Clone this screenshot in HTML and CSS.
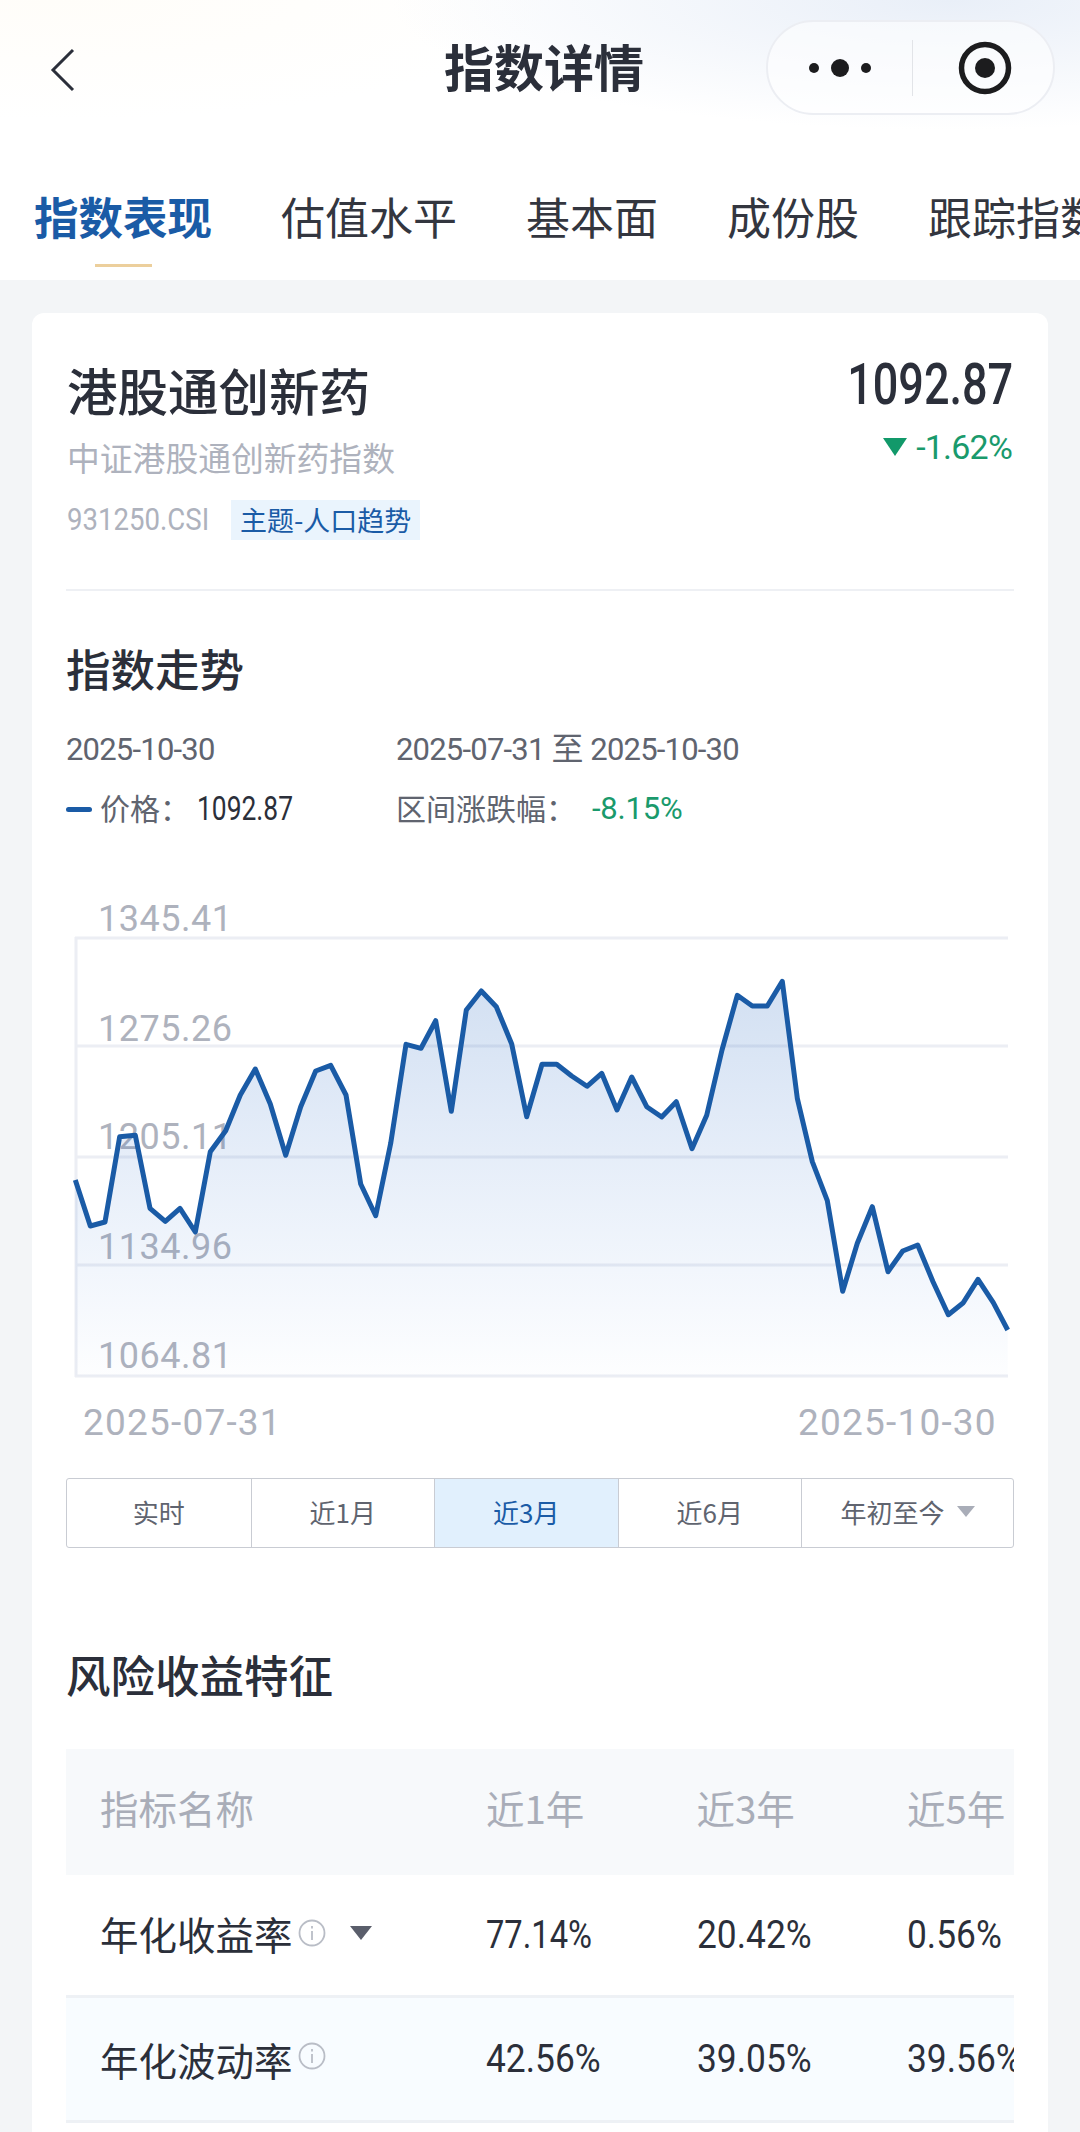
FILE: index.html
```html
<!DOCTYPE html>
<html lang="zh-CN">

<head>
    <meta charset="UTF-8">
    <meta name="viewport" content="width=device-width, initial-scale=1.0">
    <title>指数详情</title>
    <link rel="stylesheet" href="styles.css">
</head>

<body>
    <header class="top">
        <div class="nav">
            <svg class="back" width="30" height="50" viewBox="0 0 30 50">
                <path d="M23 5 L3 25 L23 45" fill="none" stroke="#2b2f3a" stroke-width="3" />
            </svg>
            <h1 class="nav-title">指数详情</h1>
            <div class="capsule">
                <svg class="capsule-dots" width="64" height="24" viewBox="0 0 64 24">
                    <circle cx="6" cy="12" r="5" fill="#1c1c1e" />
                    <circle cx="32" cy="12" r="9" fill="#1c1c1e" />
                    <circle cx="58" cy="12" r="5" fill="#1c1c1e" />
                </svg>
                <span class="capsule-line"></span>
                <svg class="capsule-target" width="54" height="54" viewBox="0 0 54 54">
                    <circle cx="27" cy="27" r="23.5" fill="none" stroke="#1c1c1e" stroke-width="5.5" />
                    <circle cx="27" cy="27" r="10" fill="#1c1c1e" />
                </svg>
            </div>
        </div>
        <nav class="tabs">
            <span class="tab active">指数表现</span>
            <span class="tab">估值水平</span>
            <span class="tab">基本面</span>
            <span class="tab">成份股</span>
            <span class="tab">跟踪指数</span>
        </nav>
    </header>

    <main class="page">
        <section class="card">
            <div class="summary">
                <div>
                    <h2 class="index-name">港股通创新药</h2>
                    <p class="index-full">中证港股通创新药指数</p>
                    <div class="code-row">
                        <div class="code-box"><span class="code num">931250.CSI</span></div>
                        <span class="tag">主题-人口趋势</span>
                    </div>
                </div>
                <div class="quote">
                    <div class="price num">1092.87</div>
                    <div class="change num"><i class="down"></i>-1.62%</div>
                </div>
            </div>

            <h2 class="section-title first">指数走势</h2>
            <div class="info-grid">
                <div class="date num">2025-10-30</div>
                <div class="date num">2025-07-31 <span class="cjk">至</span> 2025-10-30</div>
                <div class="legend"><i class="legend-line"></i>价格：<span class="legend-price num">1092.87</span></div>
                <div class="legend">区间涨跌幅：<span class="legend-change num">-8.15%</span></div>
            </div>

            <svg class="chart" width="948" height="555" viewBox="66 890 948 555">
                <defs>
                    <linearGradient id="area" x1="0" y1="981" x2="0" y2="1376" gradientUnits="userSpaceOnUse">
                        <stop offset="0" stop-color="#1f62bd" stop-opacity="0.2" />
                        <stop offset="1" stop-color="#2a6fd6" stop-opacity="0.01" />
                    </linearGradient>
                </defs>
                <g stroke="#eceef4" stroke-width="3">
                    <line x1="75" y1="938" x2="1008" y2="938" />
                    <line x1="75" y1="1046" x2="1008" y2="1046" />
                    <line x1="75" y1="1157" x2="1008" y2="1157" />
                    <line x1="75" y1="1265" x2="1008" y2="1265" />
                    <line x1="75" y1="1376" x2="1008" y2="1376" />
                    <line x1="76" y1="937" x2="76" y2="1377" />
                </g>
                <g class="axis-label">
                    <text x="98" y="931">1345.41</text>
                    <text x="98" y="1041">1275.26</text>
                    <text x="98" y="1149">1205.11</text>
                    <text x="98" y="1259">1134.96</text>
                    <text x="98" y="1368">1064.81</text>
                </g>
                <g class="axis-label dates">
                    <text x="83" y="1435">2025-07-31</text>
                    <text x="798" y="1435">2025-10-30</text>
                </g>
                <polygon fill="url(#area)" points="75.3,1376 75.3,1180 90.3,1226 105,1222 119.7,1136.7 135.3,1135.3 150,1208.3 165.3,1221.3 180,1208.3 195.3,1232 210.3,1151.7 225.7,1130.7 240.3,1095 255.3,1069 270.3,1104 285.7,1155.3 300.7,1106.7 315.7,1071 330.7,1065.3 346,1095 360.7,1184 375.7,1215.7 390.7,1143.3 406,1044.3 421,1048.3 435.7,1020.7 451.3,1111.3 466.3,1010 481.3,991 496.3,1006.7 511.7,1044 526.7,1116.7 542,1064.3 556.7,1064.3 571.7,1076 587,1086.3 601.7,1073.3 617,1110 631.7,1077 646.7,1106.7 661.7,1117 676.3,1101.7 692,1148.7 706.7,1115.3 722,1050 737.3,995.3 752.3,1006 767.3,1006 782.3,981.3 797.3,1098.3 812.3,1161.7 827.3,1200.7 842.7,1291.3 857.3,1243.3 872.3,1206.7 888,1271.7 902.7,1251 917.7,1245 933,1281.7 948.3,1314.7 963.3,1302.7 978,1279.3 993.3,1302.7 1007.7,1330 1007.7,1376" />
                <polyline fill="none" stroke="#1a5ba6" stroke-width="5" stroke-linejoin="round" points="75.3,1180 90.3,1226 105,1222 119.7,1136.7 135.3,1135.3 150,1208.3 165.3,1221.3 180,1208.3 195.3,1232 210.3,1151.7 225.7,1130.7 240.3,1095 255.3,1069 270.3,1104 285.7,1155.3 300.7,1106.7 315.7,1071 330.7,1065.3 346,1095 360.7,1184 375.7,1215.7 390.7,1143.3 406,1044.3 421,1048.3 435.7,1020.7 451.3,1111.3 466.3,1010 481.3,991 496.3,1006.7 511.7,1044 526.7,1116.7 542,1064.3 556.7,1064.3 571.7,1076 587,1086.3 601.7,1073.3 617,1110 631.7,1077 646.7,1106.7 661.7,1117 676.3,1101.7 692,1148.7 706.7,1115.3 722,1050 737.3,995.3 752.3,1006 767.3,1006 782.3,981.3 797.3,1098.3 812.3,1161.7 827.3,1200.7 842.7,1291.3 857.3,1243.3 872.3,1206.7 888,1271.7 902.7,1251 917.7,1245 933,1281.7 948.3,1314.7 963.3,1302.7 978,1279.3 993.3,1302.7 1007.7,1330" />
            </svg>

            <div class="ranges">
                <div class="range">实时</div>
                <div class="range">近1月</div>
                <div class="range active">近3月</div>
                <div class="range">近6月</div>
                <div class="range">年初至今<i class="range-arrow"></i></div>
            </div>

            <h2 class="section-title risk">风险收益特征</h2>
            <div class="table">
                <div class="row head">
                    <div class="cell name">指标名称</div>
                    <div class="cell">近1年</div>
                    <div class="cell">近3年</div>
                    <div class="cell">近5年</div>
                </div>
                <div class="row first-row">
                    <div class="cell name">年化收益率
                        <svg class="info" width="28" height="28" viewBox="0 0 28 28">
                            <circle cx="14" cy="14" r="12.5" fill="none" stroke="#b9bdc6" stroke-width="1.8" />
                            <path d="M14 12 V21 M14 7 V9.5" stroke="#b9bdc6" stroke-width="1.8" />
                        </svg>
                        <i class="row-arrow"></i>
                    </div>
                    <div class="cell num value tight">77.14%</div>
                    <div class="cell num value">20.42%</div>
                    <div class="cell num value">0.56%</div>
                </div>
                <div class="row tint">
                    <div class="cell name">年化波动率
                        <svg class="info raised" width="28" height="28" viewBox="0 0 28 28">
                            <circle cx="14" cy="14" r="12.5" fill="none" stroke="#b9bdc6" stroke-width="1.8" />
                            <path d="M14 12 V21 M14 7 V9.5" stroke="#b9bdc6" stroke-width="1.8" />
                        </svg>
                    </div>
                    <div class="cell num value">42.56%</div>
                    <div class="cell num value">39.05%</div>
                    <div class="cell num value">39.56%</div>
                </div>
            </div>
        </section>
    </main>
</body>

</html>
```

FILE: styles.css
```css
* {
    box-sizing: border-box;
}

html,
body {
    margin: 0;
    height: 2132px;
    overflow: hidden;
}

body {
    background: #f3f5f7;
    color: #2b2f3a;
    font-family: "Noto Sans CJK SC", "Noto Sans", sans-serif;
}

h1,
h2,
p {
    margin: 0;
}

i {
    display: block;
}

.num {
    font-family: "Roboto", sans-serif;
}

.cjk {
    font-family: "Noto Sans CJK SC", sans-serif;
}

/* header */
.top {
    height: 280px;
    background:
        radial-gradient(ellipse 560px 130px at 88% 0, #e9eff8 0, rgba(233, 239, 248, 0) 100%),
        radial-gradient(ellipse 500px 120px at 5% 0, #fffdf9 0, rgba(255, 253, 249, 0) 100%),
        #fff;
}

.nav {
    display: grid;
    grid-template-columns: 1fr auto 1fr;
    height: 136px;
    padding: 20px 25px 0 33px;
}

.back {
    margin: 25px 0 0 17px;
}

.nav-title {
    margin-top: -3px;
    font-size: 50px;
    line-height: 96px;
    font-weight: 700;
}

.capsule {
    justify-self: end;
    display: flex;
    align-items: center;
    width: 289px;
    height: 95px;
    border: 2px solid #eceef3;
    border-radius: 48px;
    background: rgba(255, 255, 255, 0.55);
}

.capsule-dots {
    margin-left: 40px;
}

.capsule-line {
    width: 1px;
    height: 56px;
    margin-left: 40px;
    background: #e2e4e8;
}

.capsule-target {
    margin-left: 45px;
}

.tabs {
    display: flex;
    gap: 69px;
    height: 144px;
    padding: 47px 0 0 34px;
    overflow: hidden;
    white-space: nowrap;
    font-size: 44px;
    line-height: 66px;
    color: #33363f;
}

.tab {
    position: relative;
    flex: none;
    height: 66px;
}

.tab.active {
    font-size: 44.5px;
    color: #1a5ba6;
    font-weight: 700;
}

.tab.active::after {
    content: "";
    position: absolute;
    left: 61px;
    top: 81px;
    width: 57px;
    height: 3px;
    background: #eccf9c;
}

/* card */
.page {
    padding: 33px 32px 0;
}

.card {
    height: 1900px;
    padding: 0 34px;
    border-radius: 12px;
    background: #fff;
}

.summary {
    display: flex;
    justify-content: space-between;
    padding: 46px 0 49px 1px;
    border-bottom: 2px solid #eef0f4;
}

.index-name {
    font-size: 50.5px;
    line-height: 60px;
    font-weight: 500;
}

.index-full {
    margin-top: 16px;
    font-size: 32.8px;
    line-height: 44px;
    color: #aeb2bd;
}

.code-row {
    display: flex;
    align-items: center;
    height: 40px;
    margin-top: 21px;
}

.code-box {
    width: 164px;
    height: 40px;
    line-height: 40px;
}

.code {
    display: inline-block;
    font-size: 31px;
    color: #aeb2bd;
    transform: scaleX(0.89);
    transform-origin: left;
}

.tag {
    padding: 0 9px;
    font-size: 27px;
    line-height: 40px;
    color: #1a5ba6;
    background: #eaf4fd;
}

.quote {
    margin-top: -4px;
    padding-right: 1px;
    text-align: right;
}

.price {
    font-size: 57px;
    line-height: 60px;
    font-weight: 500;
    transform: scaleX(0.79);
    transform-origin: right;
}

.change {
    display: flex;
    justify-content: flex-end;
    align-items: center;
    gap: 9px;
    height: 44px;
    margin-top: 10px;
    padding-right: 1px;
    font-size: 34px;
    letter-spacing: -0.8px;
    color: #1a9a6c;
}

.down {
    width: 0;
    height: 0;
    border-left: 12px solid transparent;
    border-right: 12px solid transparent;
    border-top: 18px solid #12996a;
}

.section-title {
    font-size: 44.5px;
    line-height: 60px;
    font-weight: 500;
}

.section-title.first {
    margin-top: 47px;
}

.section-title.risk {
    margin-top: 96px;
}

.info-grid {
    display: grid;
    grid-template-columns: 330px 1fr;
    row-gap: 15px;
    margin-top: 32px;
    line-height: 40px;
    color: #60646f;
}

.date {
    height: 40px;
    font-size: 31px;
    letter-spacing: -0.8px;
}

.date .cjk {
    font-size: 32px;
    line-height: 1;
    letter-spacing: 0;
}

.legend {
    display: flex;
    align-items: center;
    font-size: 30px;
}

.legend-line {
    width: 26px;
    height: 5px;
    margin-top: 4px;
    margin-right: 8px;
    border-radius: 3px;
    background: #1a5ba6;
}

.legend-price {
    margin-left: 7px;
    padding-top: 4px;
    font-size: 33px;
    color: #2b2f3a;
    transform: scaleX(0.8);
    transform-origin: left;
}

.legend-change {
    margin-left: 16px;
    padding-top: 4px;
    font-size: 31px;
    letter-spacing: -0.2px;
    color: #1a9a6c;
}

/* chart */
.chart {
    display: block;
    margin-top: 61px;
}

.axis-label {
    font-family: "Roboto", sans-serif;
    font-size: 36px;
    letter-spacing: 0.5px;
    fill: #aeb2bd;
}

.axis-label.dates {
    font-size: 37px;
    letter-spacing: 1.2px;
}

.ranges {
    display: grid;
    grid-template-columns: repeat(4, 183.5px) 1fr;
    height: 70px;
    margin-top: 33px;
    border: 1px solid #c9ccd3;
    border-radius: 3px;
}

.range {
    display: flex;
    justify-content: center;
    align-items: center;
    padding-bottom: 4px;
    font-size: 26px;
    color: #60646f;
    border-left: 1px solid #c9ccd3;
}

.range:first-child {
    border-left: 0;
}

.range.active {
    color: #1a5ba6;
    background: #e1f0fd;
}

.range-arrow {
    width: 0;
    height: 0;
    margin-left: 12px;
    border-left: 9px solid transparent;
    border-right: 9px solid transparent;
    border-top: 11px solid #a9adb8;
}

/* table */
.table {
    margin-top: 45px;
    overflow: hidden;
}

.row {
    display: grid;
    grid-template-columns: 420px 210.5px 210.5px 210.5px;
    align-items: center;
    height: 123px;
    border-bottom: 3px solid #eef1f5;
    font-size: 38.5px;
}

.row.head {
    height: 126px;
    padding-bottom: 10px;
    border-bottom: 0;
    color: #a9adb8;
    background: #f7f9fb;
}

.row.first-row .name {
    padding-bottom: 4px;
}

.row.tint {
    height: 125px;
    background: #f8fcff;
}

.cell {
    white-space: nowrap;
}

.cell.name {
    display: flex;
    align-items: center;
    padding-left: 34px;
}

.cell.value {
    font-size: 38px;
    transform: scaleX(0.93);
    transform-origin: left;
}

.cell.value.tight {
    transform: scaleX(0.86);
}

.info {
    margin-left: 5px;
}

.info.raised {
    margin-top: -6px;
}

.row-arrow {
    width: 0;
    height: 0;
    margin-left: 24px;
    border-left: 11px solid transparent;
    border-right: 11px solid transparent;
    border-top: 14px solid #5a5e6b;
}
```
